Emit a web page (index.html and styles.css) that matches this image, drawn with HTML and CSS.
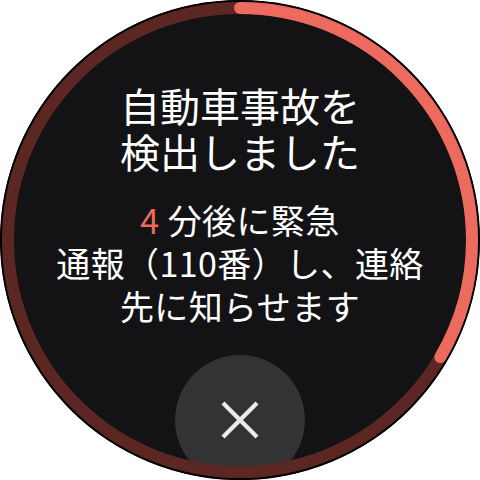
FILE: index.html
```html
<!DOCTYPE html>
<html lang="ja">
<head>
<meta charset="utf-8">
<link rel="stylesheet" href="styles.css">
</head>
<body>
<div class="watch">
  <div class="face">
    <h1 class="title">自動車事故を<br>検出しました</h1>
    <p class="message"><span class="count">4</span> 分後に緊急<br>通報（110番）し、連絡<br>先に知らせます</p>
    <button class="cancel" aria-label="キャンセル">
      <svg width="40" height="40" viewBox="0 0 40 40"><path d="M3 3 L37 37 M37 3 L3 37" stroke="#ececec" stroke-width="4.2" stroke-linecap="butt" fill="none"/></svg>
    </button>
  </div>
  <svg class="ring" width="480" height="480" viewBox="0 0 480 480">
    <circle cx="240" cy="240" r="239" fill="none" stroke="#000" stroke-width="2"/>
    <circle cx="240" cy="240" r="232" fill="none" stroke="#5c2723" stroke-width="12"/>
    <circle cx="240" cy="240" r="232" fill="none" stroke="#ec6a5e" stroke-width="12" stroke-linecap="round" stroke-dasharray="487 1500" transform="rotate(-90 240 240)"/>
  </svg>
</div>
</body>
</html>
```

FILE: styles.css
```css
html, body {
  margin: 0;
  padding: 0;
  background: #ffffff;
}
.watch {
  position: relative;
  width: 480px;
  height: 480px;
  border-radius: 50%;
  overflow: hidden;
  background: #131315;
}
.face {
  display: flex;
  flex-direction: column;
  align-items: center;
  height: 480px;
  padding-top: 82px;
  box-sizing: border-box;
  font-family: "Noto Sans CJK JP", "Noto Sans", sans-serif;
  color: #ffffff;
  text-align: center;
}
.title {
  margin: 0;
  font-size: 40px;
  font-weight: 400;
  line-height: 46px;
  flex-shrink: 0;
}
.message {
  margin: 24px 0 0;
  font-size: 34px;
  font-weight: 400;
  line-height: 43px;
  letter-spacing: 0.4px;
  flex-shrink: 0;
}
.count {
  color: #ee675c;
}
.cancel {
  flex-shrink: 0;
  margin-top: 28px;
  width: 130px;
  height: 130px;
  border: none;
  border-radius: 50%;
  background: #333333;
  display: flex;
  align-items: flex-start;
  justify-content: center;
  padding: 45px 0 0;
}
.cancel svg {
  display: block;
}
.ring {
  position: absolute;
  left: 0;
  top: 0;
  pointer-events: none;
}
```
